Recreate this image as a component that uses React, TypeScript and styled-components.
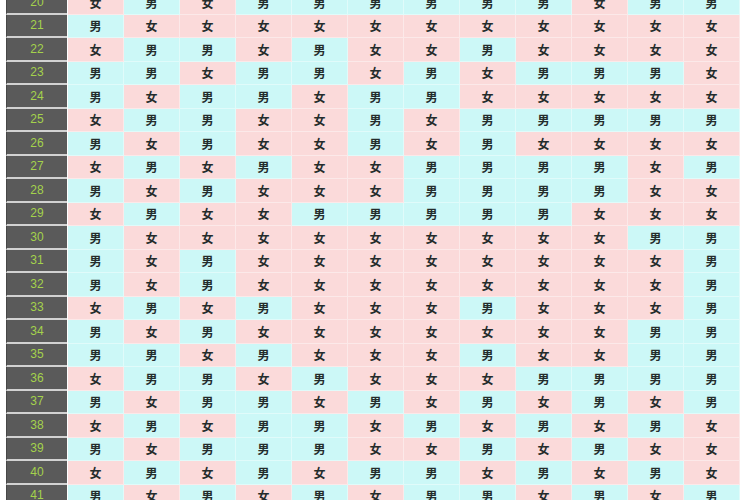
import React from "react";
import styled, { createGlobalStyle } from "styled-components";

const GlobalStyle = createGlobalStyle`
  html, body {
    margin: 0;
    padding: 0;
    background: #ffffff;
    overflow: hidden;
  }
`;

// row age -> 12 months, M = 男, F = 女
const chart: Record<number, string> = {
  20: "FMFMMMMMMFMM",
  21: "MFFFFFFFFFFF",
  22: "FMMFMFFMFFFF",
  23: "MMFMMFMFMMMF",
  24: "MFMMFMMFFFFF",
  25: "FMMFFMFMMMMM",
  26: "MFMFFMFMFFFF",
  27: "FMFMFFMMMMFM",
  28: "MFMFFFMMMMFF",
  29: "FMFFMMMMMFFF",
  30: "MFFFFFFFFFMM",
  31: "MFMFFFFFFFFM",
  32: "MFMFFFFFFFFM",
  33: "FMFMFFFMFFFM",
  34: "MFMFFFFFFFMM",
  35: "MMFMFFFMFFMM",
  36: "FMMFMFFFMMMM",
  37: "MFMMFMFMFMFM",
  38: "FMFMMFMFMFMF",
  39: "MFMMMFFMFMFF",
  40: "FMFMFMMFMFMF",
  41: "MFMFMFMMFMFM",
};

const Chart = styled.div`
  display: flex;
  flex-direction: column;
  margin-top: -9px;
  padding-left: 6px;
  width: 734px;
`;

const Row = styled.div`
  display: flex;
  height: 23.5px;
`;

const AgeCell = styled.div`
  width: 61px;
  margin-right: 1px;
  box-sizing: border-box;
  background: #5a5a5a;
  border-bottom: 2px solid #d2d2d2;
  border-left: 1px solid #474747;
  display: flex;
  align-items: center;
  justify-content: center;
  color: #a4d24c;
  font-family: "Liberation Sans", Arial, sans-serif;
  font-size: 12px;
`;

const Cell = styled.div<{ $boy: boolean }>`
  width: 56px;
  box-sizing: border-box;
  background: ${(p) => (p.$boy ? "#ccf8f7" : "#fbdada")};
  border-right: 1px solid rgba(255, 255, 255, 0.4);
  border-bottom: 1px solid rgba(255, 255, 255, 0.4);
  display: flex;
  align-items: center;
  justify-content: center;
  color: #242c2c;
  font-family: "Noto Sans CJK SC", "Noto Sans", sans-serif;
  font-size: 12px;
  font-weight: 700;
`;

export default function App() {
  const ages = Object.keys(chart).map(Number);
  return (
    <>
      <GlobalStyle />
      <Chart>
        {ages.map((age) => (
          <Row key={age}>
            <AgeCell>{age}</AgeCell>
            {chart[age].split("").map((v, i) => (
              <Cell key={i} $boy={v === "M"}>
                {v === "M" ? "男" : "女"}
              </Cell>
            ))}
          </Row>
        ))}
      </Chart>
    </>
  );
}
